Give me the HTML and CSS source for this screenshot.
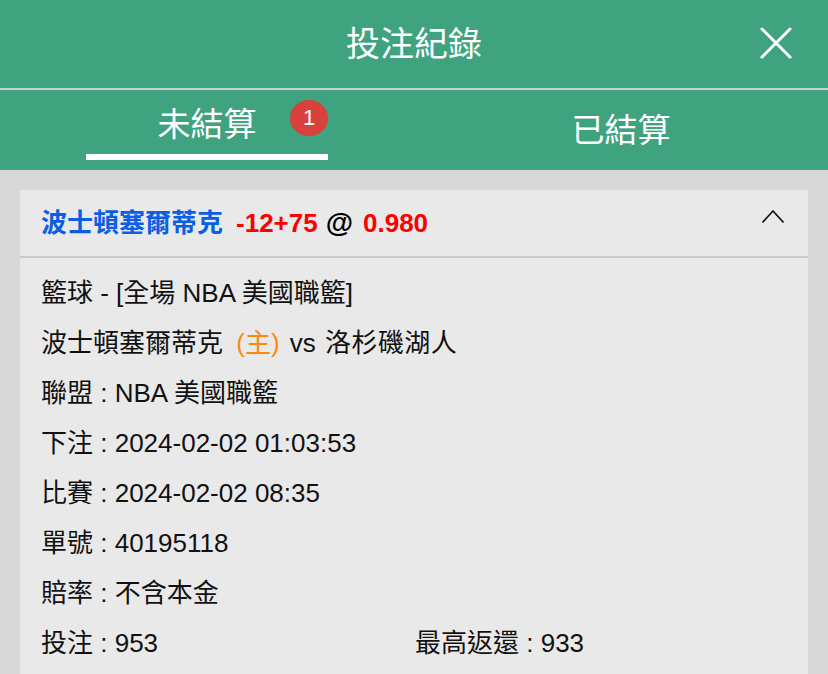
FILE: index.html
```html
<!DOCTYPE html>
<html>

<head>
  <meta charset="utf-8" />
  <title>投注紀錄</title>
  <meta name="viewport" content="width=device-width, initial-scale=1">
  <link rel="stylesheet" href="styles.css">
</head>

<body>
  <div class="bet-page">
    <div class="header">
      <h1>投注紀錄</h1>
      <button class="close">
        <svg width="36" height="36" viewBox="0 0 36 36"><path d="M4 4 L32 32 M32 4 L4 32" /></svg>
      </button>
    </div>
    <div class="tabs">
      <div class="tab-cell first">
        <a class="tab active" href="#">未結算<span class="badge">1</span></a>
      </div>
      <div class="tab-cell second">
        <a class="tab" href="#">已結算</a>
      </div>
    </div>
    <div class="list">
      <div class="card">
        <div class="card-head">
          <span class="team">波士頓塞爾蒂克</span>
          <span class="odds">-12+75</span>
          <span class="at">@</span>
          <span class="odds">0.980</span>
          <svg class="toggle" width="22" height="13" viewBox="0 0 22 13"><path d="M0.5 12.5 L11 1 L21.5 12.5" /></svg>
        </div>
        <div class="card-body">
          <div class="row">籃球 - [全場 NBA 美國職籃]</div>
          <div class="row">波士頓塞爾蒂克 <span class="home">(主)</span> <span class="versus">vs</span> <span class="away">洛杉磯湖人</span></div>
          <div class="row">聯盟 : NBA 美國職籃</div>
          <div class="row">下注 : 2024-02-02 01:03:53</div>
          <div class="row">比賽 : 2024-02-02 08:35</div>
          <div class="row">單號 : 40195118</div>
          <div class="row">賠率 : 不含本金</div>
          <div class="row half">
            <div>投注 : 953</div>
            <div>最高返還 : 933</div>
          </div>
        </div>
      </div>
    </div>
  </div>
</body>

</html>
```

FILE: styles.css
```css
* {
  margin: 0;
  padding: 0;
  box-sizing: border-box;
}

body {
  background: #d8d8d8;
  font: 26px/50px 'Liberation Sans', 'Noto Sans CJK TC', sans-serif;
  color: #111;
}

a {
  color: inherit;
  text-decoration: none;
}

button {
  background: none;
  border: 0;
  cursor: pointer;
}

.header {
  position: relative;
  height: 90px;
  border-bottom: 2px solid #c9d3cf;
  background: #3fa380;
  text-align: center;
  color: #fff;
}
.header h1 {
  font-size: 34px;
  font-weight: normal;
  line-height: 88px;
}
.header .close {
  position: absolute;
  right: 34px;
  top: 25px;
  width: 36px;
  height: 36px;
}
.header .close svg {
  display: block;
}
.header .close path {
  fill: none;
  stroke: #fff;
  stroke-width: 3;
  stroke-linecap: round;
}

.tabs {
  display: flex;
  height: 80px;
  background: #3fa380;
  color: #fff;
}
.tab-cell {
  display: flex;
  flex: 1;
  align-items: center;
  justify-content: center;
  font-size: 33px;
}
.tab-cell.first {
  align-items: flex-start;
  padding-top: 12px;
}
.tab-cell.second {
  padding-top: 2px;
}
.tab {
  display: block;
  line-height: 46px;
}
.tab.active {
  position: relative;
  width: 242px;
  padding-bottom: 6px;
  border-bottom: 6px solid #fff;
  text-align: center;
}
.badge {
  position: absolute;
  right: 0;
  top: -2px;
  width: 38px;
  height: 36px;
  border-radius: 50%;
  background: #d8413c;
  font-size: 22px;
  line-height: 36px;
}

.list {
  padding: 20px 20px 0;
}

.card {
  background: #e9e9e9;
}
.card-head {
  display: flex;
  align-items: center;
  gap: 11px;
  height: 68px;
  padding: 0 24px 0 21px;
  border-bottom: 2px solid #cbcbcb;
  font-weight: bold;
}
.card-head .team {
  margin-right: 2px;
  color: #0a5fe6;
}
.card-head .odds {
  color: #f00;
}
.card-head .at {
  margin: 0 -1px 0 -3px;
  font-size: 28px;
  color: #000;
}
.card-head .toggle {
  margin: -14px 0 0 auto;
}
.card-head .toggle path {
  fill: none;
  stroke: #111;
  stroke-width: 1.6;
}

.card-body {
  padding: 10px 21px 6px;
}
.row.half {
  display: grid;
  grid-template-columns: 374px 1fr;
}
.home {
  margin-left: 6px;
  color: #fb8a0c;
}
.versus {
  margin: 0 2px 0 3px;
}
.away {
  letter-spacing: .4px;
}
```
